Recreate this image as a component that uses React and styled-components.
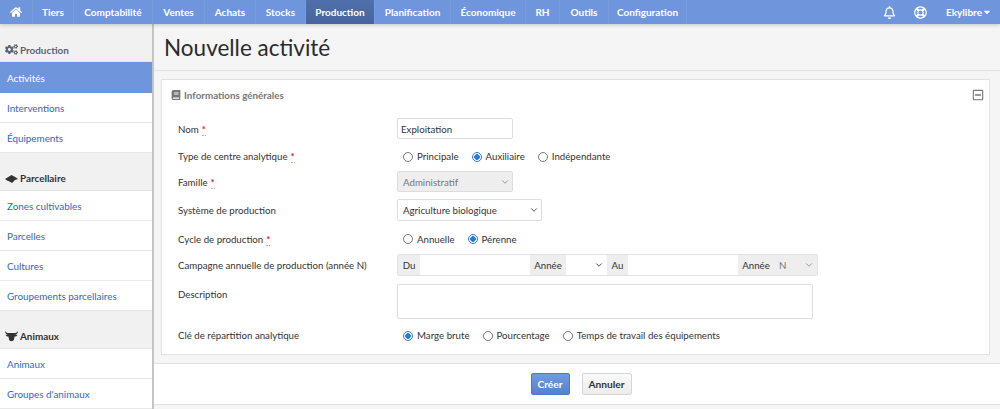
import styled, { createGlobalStyle } from 'styled-components'
import { FaHome, FaRegBell, FaRegLifeRing, FaCogs, FaBook, FaRegMinusSquare, FaCaretDown } from 'react-icons/fa'
import { LuChevronDown } from 'react-icons/lu'

const GlobalStyle = createGlobalStyle`
  html, body {
    margin: 0;
    height: 409px;
    overflow: hidden;
    background: #fff;
    font-family: Lato, "Liberation Sans", sans-serif;
    font-size: 9.7px;
    color: #333;
  }
  * { box-sizing: border-box; }
`;

const Nav = styled.nav`
  display: flex;
  align-items: stretch;
  height: 24px;
  background: #6f96dc;
  box-shadow: 0 1px 4px rgba(0, 0, 0, 0.2);
  position: relative;
  color: #fff;
  font-weight: 700;
  font-size: 10px;
`;

const NavItem = styled.a`
  display: flex;
  align-items: center;
  justify-content: center;
  width: ${p => p.$w}px;
  border-right: 1px solid #789ddf;
  background: ${p => p.$active ? 'linear-gradient(#4f70ab, #46659d)' : 'transparent'};
`;

const NavRight = styled.div`
  margin-left: auto;
  display: flex;
  align-items: center;
  padding-right: 8px;
`;

const NavIcon = styled.span`
  display: flex;
  margin-right: ${p => p.$mr}px;
  font-size: 13px;
`;

const Body = styled.div`
  display: flex;
  height: 385px;
`;

const Sidebar = styled.aside`
  width: 154px;
  flex: none;
  border-right: 2px solid #c4c4c4;
  overflow: hidden;
`;

const GroupTitle = styled.div`
  display: flex;
  align-items: flex-end;
  gap: 2px;
  height: ${p => p.$h}px;
  padding: 0 0 ${p => p.$pb || 6}px 5px;
  background: #f1f1f1;
  border-bottom: 1px solid #e4e4e4;
  font-weight: 700;
  font-size: 9.9px;
  color: ${p => p.$muted ? '#5b6470' : '#333'};
`;

const SideLink = styled.a`
  display: flex;
  align-items: center;
  height: ${p => p.$active ? 31 : 30}px;
  padding-left: 7px;
  font-size: 9.85px;
  color: ${p => p.$active ? '#fff' : '#2f66d4'};
  background: ${p => p.$active ? '#6f96dc' : '#fff'};
  border-bottom: ${p => p.$active ? '0' : '1px solid #e8e8e8'};
`;

const Main = styled.main`
  flex: 1;
  min-width: 0;
  background: #f5f5f5;
`;

const TitleBar = styled.header`
  height: 47px;
  padding: 9px 0 0 10px;
  border-bottom: 1px solid #e2e2e2;
`;

const Title = styled.h1`
  margin: 0;
  font-size: 22.5px;
  line-height: 30px;
  font-weight: 400;
  color: #2b2b2b;
`;

const Panel = styled.section`
  margin: 8px 10px 0 7px;
  height: 276px;
  background: #fff;
  border: 1px solid #e2e2e2;
`;

const PanelHead = styled.div`
  display: flex;
  align-items: center;
  justify-content: space-between;
  height: 29px;
  padding: 0 5px 0 9px;
  color: #777;
  font-size: 9.8px;
  font-weight: 700;
`;

const PanelTitle = styled.span`
  display: flex;
  align-items: center;
  gap: 3px;
  svg { font-size: 10px; }
`;

const Collapse = styled.span`
  display: flex;
  font-size: 12px;
  color: #777;
`;

const Form = styled.div`
  padding: 9px 0 0 16px;
`;

const Row = styled.div`
  display: grid;
  grid-template-columns: 219px 1fr;
  align-items: ${p => p.$top ? 'start' : 'center'};
  height: ${p => p.$h}px;
  margin-bottom: ${p => p.$mb}px;
`;

const Label = styled.label`
  padding-top: ${p => p.$top ? 4 : 0}px;
`;

const Req = styled.span`
  color: #e02020;
  font-weight: 700;
  margin-left: 3px;
  border-bottom: 1px dotted #e09a9a;
`;

const TextInput = styled.input`
  width: 116px;
  height: 21px;
  padding: 0 3px;
  border: 1px solid #ddd;
  border-radius: 2px;
  font: inherit;
  color: inherit;
  background: #fff;
`;

const Radios = styled.div`
  display: flex;
  align-items: center;
  gap: 13px;
  padding-left: 6px;
`;

const RadioLabel = styled.label`
  display: flex;
  align-items: center;
  gap: 4px;
`;

const Radio = styled.input.attrs({ type: 'radio', readOnly: true })`
  appearance: none;
  width: 10px;
  height: 10px;
  margin: 1px 0 0;
  border-radius: 50%;
  border: 1px solid #77777f;
  background: #fff;
  &:checked {
    border-color: #2a7ae2;
    background: radial-gradient(circle, #2a7ae2 0 2.6px, #fff 3px);
  }
`;

const SelectBox = styled.div`
  position: relative;
  width: ${p => p.$w}px;
  height: ${p => p.$h || 21}px;
  flex: none;
  svg {
    position: absolute;
    right: 3px;
    top: 50%;
    margin-top: -5px;
    font-size: 10px;
    color: ${p => p.$off ? '#888' : '#333'};
    pointer-events: none;
  }
`;

const Select = styled.select`
  appearance: none;
  width: 100%;
  height: 100%;
  padding: 0 5px;
  border: ${p => p.$flat ? '0' : '1px solid #ddd'};
  border-radius: ${p => p.$flat ? 0 : 2}px;
  background: ${p => p.disabled ? '#eee' : '#fff'};
  font: inherit;
  color: ${p => p.disabled ? '#777' : 'inherit'};
  opacity: 1;
`;

const InputGroup = styled.div`
  display: flex;
  width: 421px;
  height: 22px;
  border: 1px solid #e2e2e2;
  border-radius: 2px;
`;

const Addon = styled.span`
  display: flex;
  align-items: center;
  justify-content: center;
  width: ${p => p.$w}px;
  flex: none;
  background: #eee;
`;

const GroupInput = styled.input`
  width: 110px;
  flex: none;
  border: 0;
  background: #fff;
`;

const TextArea = styled.textarea`
  display: block;
  width: 416px;
  height: 35px;
  border: 1px solid #ddd;
  border-radius: 2px;
  resize: none;
`;

const Actions = styled.footer`
  display: flex;
  justify-content: center;
  gap: 12px;
  height: 42px;
  margin-top: 8px;
  padding: 9px 0 0 8px;
  background: #fff;
  border-top: 1px solid #e2e2e2;
  border-bottom: 1px solid #e2e2e2;
`;

const Button = styled.button`
  height: 22px;
  width: ${p => p.$w}px;
  padding: 0;
  border-radius: 2px;
  border: 1px solid ${p => p.$primary ? '#4f78c4' : '#d5d5d5'};
  background: ${p => p.$primary ? 'linear-gradient(#709ae0, #5681d0)' : 'linear-gradient(#fafafa, #ececec)'};
  color: ${p => p.$primary ? '#fff' : '#333'};
  font: inherit;
  font-weight: 700;
  font-size: 10.2px;
`;

const navItems = [
  ['Tiers', 41], ['Comptabilité', 79], ['Ventes', 52], ['Achats', 51], ['Stocks', 50],
  ['Production', 69, true], ['Planification', 76], ['Économique', 75], ['RH', 34], ['Outils', 49], ['Configuration', 78],
];

const Chevron = () => <LuChevronDown />;

const Parcel = () => (
  <svg width="13" height="10" viewBox="0 0 13 10" fill="#333">
    <path d="M6.5 1 L11 3.5 L13 5 L10 6 L7 9 L4.5 7.5 L2 6.5 L0 5 L2.5 3.5 Z" />
  </svg>
);

// tete de vache
const Bull = () => (
  <svg width="13" height="12" viewBox="0 0 13 12" fill="#333">
    <path d="M0 0.5 C0.5 2.5 2 3 4 3 L9 3 C11 3 12.5 2.5 13 0.5 C13 3.5 11.5 4.5 10 4.8 L12.5 5 L11 6.5 L9.6 6.5 L8.8 10 C8.5 11.5 4.5 11.5 4.2 10 L3.4 6.5 L2 6.5 L0.5 5 L3 4.8 C1.5 4.5 0 3.5 0 0.5 Z" />
  </svg>
);

const App = () => {
  return (
    <>
      <GlobalStyle />
      <Nav>
        <NavItem $w={33}><FaHome size={12} /></NavItem>
        {navItems.map(([name, w, active]) => (
          <NavItem key={name} $w={w} $active={active}>{name}</NavItem>
        ))}
        <NavRight>
          <NavIcon $mr={18}><FaRegBell /></NavIcon>
          <NavIcon $mr={19}><FaRegLifeRing /></NavIcon>
          Ekylibre
          <FaCaretDown size={10} />
        </NavRight>
      </Nav>
      <Body>
        <Sidebar>
          <GroupTitle $h={38} $pb={5} $muted><FaCogs size={13} />Production</GroupTitle>
          <SideLink $active>Activités</SideLink>
          <SideLink>Interventions</SideLink>
          <SideLink>Équipements</SideLink>
          <GroupTitle $h={38}><Parcel />Parcellaire</GroupTitle>
          <SideLink>Zones cultivables</SideLink>
          <SideLink>Parcelles</SideLink>
          <SideLink>Cultures</SideLink>
          <SideLink>Groupements parcellaires</SideLink>
          <GroupTitle $h={38}><Bull />Animaux</GroupTitle>
          <SideLink>Animaux</SideLink>
          <SideLink>Groupes d'animaux</SideLink>
        </Sidebar>
        <Main>
          <TitleBar><Title>Nouvelle activité</Title></TitleBar>
          <Panel>
            <PanelHead>
              <PanelTitle><FaBook />Informations générales</PanelTitle>
              <Collapse><FaRegMinusSquare /></Collapse>
            </PanelHead>
            <Form>
              <Row $h={21} $mb={7}>
                <Label>Nom<Req>*</Req></Label>
                <TextInput defaultValue="Exploitation" />
              </Row>
              <Row $h={20} $mb={5}>
                <Label>Type de centre analytique<Req>*</Req></Label>
                <Radios>
                  <RadioLabel><Radio name="type" />Principale</RadioLabel>
                  <RadioLabel><Radio name="type" defaultChecked />Auxiliaire</RadioLabel>
                  <RadioLabel><Radio name="type" />Indépendante</RadioLabel>
                </Radios>
              </Row>
              <Row $h={21} $mb={7}>
                <Label>Famille<Req>*</Req></Label>
                <SelectBox $w={116} $off>
                  <Select disabled><option>Administratif</option></Select>
                  <Chevron />
                </SelectBox>
              </Row>
              <Row $h={22} $mb={7}>
                <Label>Système de production</Label>
                <SelectBox $w={145} $h={22}>
                  <Select><option>Agriculture biologique</option></Select>
                  <Chevron />
                </SelectBox>
              </Row>
              <Row $h={21} $mb={5}>
                <Label>Cycle de production<Req>*</Req></Label>
                <Radios>
                  <RadioLabel><Radio name="cycle" />Annuelle</RadioLabel>
                  <RadioLabel><Radio name="cycle" defaultChecked />Pérenne</RadioLabel>
                </Radios>
              </Row>
              <Row $h={22} $mb={8}>
                <Label>Campagne annuelle de production (année N)</Label>
                <InputGroup>
                  <Addon $w={22}>Du</Addon>
                  <GroupInput />
                  <Addon $w={36}>Année</Addon>
                  <SelectBox $w={41} $h={20}>
                    <Select $flat><option></option></Select>
                    <Chevron />
                  </SelectBox>
                  <Addon $w={21}>Au</Addon>
                  <GroupInput />
                  <Addon $w={36}>Année</Addon>
                  <SelectBox $w={43} $h={20} $off>
                    <Select $flat disabled><option>N</option></Select>
                    <Chevron />
                  </SelectBox>
                </InputGroup>
              </Row>
              <Row $h={35} $mb={6} $top>
                <Label $top>Description</Label>
                <TextArea />
              </Row>
              <Row $h={20} $mb={0}>
                <Label>Clé de répartition analytique</Label>
                <Radios>
                  <RadioLabel><Radio name="key" defaultChecked />Marge brute</RadioLabel>
                  <RadioLabel><Radio name="key" />Pourcentage</RadioLabel>
                  <RadioLabel><Radio name="key" />Temps de travail des équipements</RadioLabel>
                </Radios>
              </Row>
            </Form>
          </Panel>
          <Actions>
            <Button $primary $w={39}>Créer</Button>
            <Button $w={50}>Annuler</Button>
          </Actions>
        </Main>
      </Body>
    </>
  )
}

export default App
